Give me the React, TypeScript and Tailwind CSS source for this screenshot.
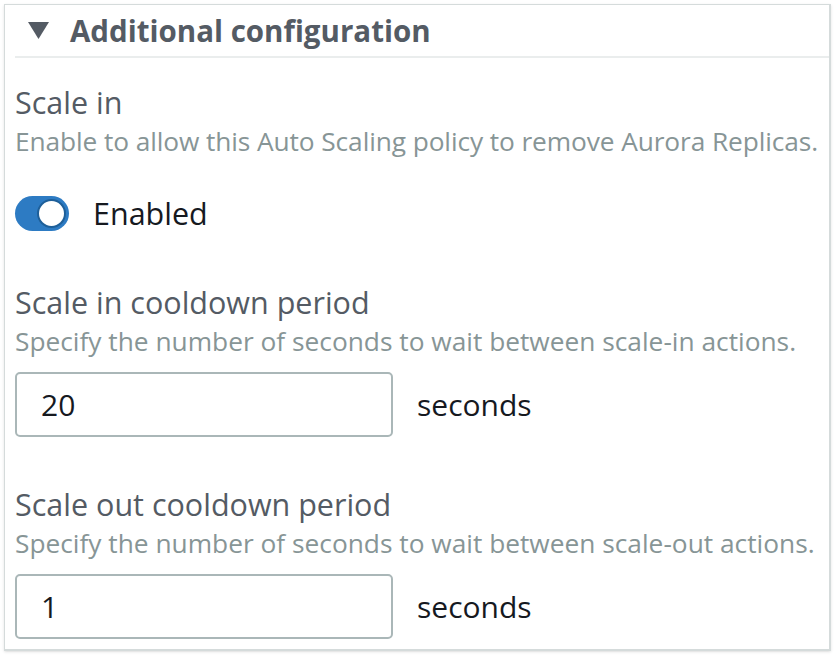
import { useState } from "react";

const Field = ({ label, hint, value }: { label: string; hint: string; value: string }) => {
    return (
        <div>
            <div className="text-[30.5px] leading-[40px] text-[#545b64]">{label}</div>
            <div className="text-[26.3px] leading-[38px] text-[#879596] whitespace-nowrap">{hint}</div>
            <div className="flex items-center mt-[12px]">
                <div className="w-[378px] h-[65px] border-2 border-[#aab7b8] rounded-[5px] flex items-center px-[24px] text-[30px] text-[#16191f]">
                    {value}
                </div>
                <span className="ml-[24px] text-[30px] text-[#16191f]">seconds</span>
            </div>
        </div>
    );
};

const App = () => {
    const [on, setOn] = useState(true);

    return (
        <div className="w-[835px] h-[655px] bg-white pt-[4px] pl-[4px] overflow-hidden" style={{ fontFamily: "'Open Sans', 'Noto Sans', sans-serif" }}>
            <div className="w-[827px] h-[647px] border border-[#d5dbdb] border-r-2 border-b-2 shadow-sm">
                <div className="flex items-center h-[51px] pl-[23px]">
                    <svg width="21" height="18" viewBox="0 0 21 18" className="mt-[1px]">
                        <polygon points="0,0 21,0 10.5,17" fill="#545b64" />
                    </svg>
                    <span className="ml-[21px] text-[29.5px] font-bold text-[#545b64] leading-none">Additional configuration</span>
                </div>
                <div className="ml-[10px] border-t-2 border-[#eaeded]"></div>
                <div className="pl-[10px] pt-[24px]">
                    <div className="text-[30.5px] leading-[40px] text-[#545b64]">Scale in</div>
                    <div className="text-[26.3px] leading-[38px] text-[#879596] whitespace-nowrap tracking-[-0.1px]">
                        Enable to allow this Auto Scaling policy to remove Aurora Replicas.
                    </div>
                    <div className="flex items-center mt-[31px]">
                        <button
                            onClick={() => setOn(!on)}
                            className={`w-[54px] h-[35px] rounded-full flex items-center px-[3px] ${on ? "bg-[#2d7bc3] justify-end" : "bg-[#aab7b8] justify-start"}`}
                        >
                            <span className="w-[29px] h-[29px] rounded-full bg-white border-2 border-[#1e5f99]"></span>
                        </button>
                        <span className="ml-[24px] text-[30.5px] text-[#16191f]">Enabled</span>
                    </div>
                    <div className="mt-[45px]">
                        <Field label="Scale in cooldown period" hint="Specify the number of seconds to wait between scale-in actions." value="20" />
                    </div>
                    <div className="mt-[47px]">
                        <Field label="Scale out cooldown period" hint="Specify the number of seconds to wait between scale-out actions." value="1" />
                    </div>
                </div>
            </div>
        </div>
    );
};

export default App;
